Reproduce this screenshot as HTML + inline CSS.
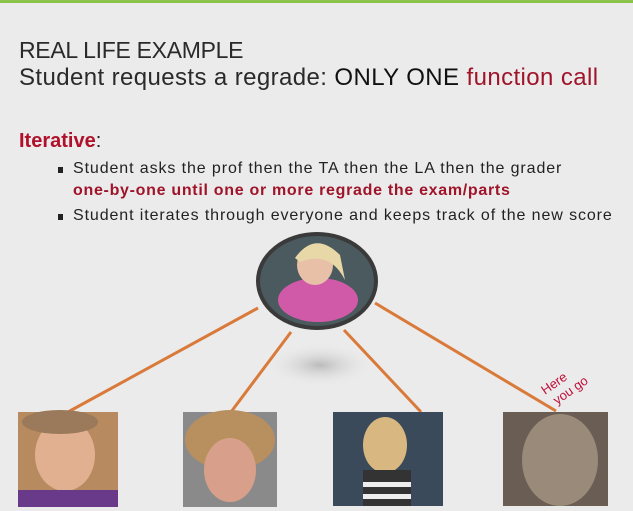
<!DOCTYPE html>
<html><head><style>
body{margin:0;width:633px;height:511px;overflow:hidden;background:#ebebeb;font-family:"Liberation Sans",sans-serif;position:relative}
.t{position:absolute;white-space:nowrap}
.b{position:absolute;left:58px;width:5px;height:6px;background:#222}
</style></head><body>
<div style="position:absolute;left:0;top:0;width:633px;height:3px;background:#8bc34a"></div>
<div class="t" style="left:19px;top:37px;font-size:23px;color:#2a2a2a;letter-spacing:-0.3px">REAL LIFE EXAMPLE</div>
<div class="t" style="left:19px;top:64px;font-size:24px;color:#2a2a2a;letter-spacing:0.4px">Student requests a regrade: <span style="color:#111">ONLY ONE</span> <span style="color:#a0142a">function call</span></div>
<div class="t" style="left:19px;top:130px;font-size:20px;font-weight:bold;color:#b0102a">Iterative<span style="color:#222;font-weight:normal">:</span></div>
<div class="b" style="top:167px"></div>
<div class="t" style="left:73px;top:160px;font-size:16px;color:#222;letter-spacing:0.9px">Student asks the prof then the TA then the LA then the grader</div>
<div class="t" style="left:73px;top:182px;font-size:16px;font-weight:bold;color:#a0142a;letter-spacing:0.7px">one-by-one until one or more regrade the exam/parts</div>
<div class="b" style="top:214px"></div>
<div class="t" style="left:73px;top:207px;font-size:16px;color:#222;letter-spacing:0.9px">Student iterates through everyone and keeps track of the new score</div>
<svg width="633" height="511" style="position:absolute;left:0;top:0">
<defs><radialGradient id="sh"><stop offset="0" stop-color="#bbb"/><stop offset="1" stop-color="#ebebeb" stop-opacity="0"/></radialGradient></defs>
<ellipse cx="320" cy="365" rx="55" ry="22" fill="url(#sh)"/>
<g stroke="#d97a3a" stroke-width="3">
<line x1="258" y1="308" x2="68" y2="412"/><line x1="291" y1="332" x2="231" y2="412"/>
<line x1="344" y1="330" x2="421" y2="412"/><line x1="375" y1="303" x2="556" y2="411"/></g>
<ellipse cx="317" cy="281" rx="59" ry="47" fill="#4a5a5e" stroke="#3a3a3a" stroke-width="4"/>
<ellipse cx="318" cy="300" rx="40" ry="22" fill="#d05aa8"/>
<ellipse cx="315" cy="265" rx="18" ry="20" fill="#e8c0a8"/>
<path d="M295 258 Q315 230 340 255 L345 280 Q330 250 300 262Z" fill="#e8d8a8"/>
<rect x="18" y="412" width="100" height="95" fill="#b88a60"/>
<ellipse cx="65" cy="455" rx="30" ry="36" fill="#e0b090"/><rect x="18" y="490" width="100" height="17" fill="#6a3a8a"/>
<ellipse cx="60" cy="422" rx="38" ry="12" fill="#9a7a5a"/>
<rect x="183" y="412" width="94" height="95" fill="#8a8a8a"/>
<ellipse cx="230" cy="440" rx="45" ry="30" fill="#b89060"/><ellipse cx="230" cy="470" rx="26" ry="32" fill="#d8a08a"/>
<rect x="333" y="412" width="110" height="94" fill="#3a4a5a"/>
<ellipse cx="385" cy="445" rx="22" ry="28" fill="#d8b880"/><rect x="363" y="470" width="48" height="36" fill="#333"/>
<rect x="363" y="482" width="48" height="5" fill="#eee"/><rect x="363" y="494" width="48" height="5" fill="#eee"/>
<rect x="503" y="412" width="105" height="94" fill="#6a5e54"/>
<ellipse cx="560" cy="460" rx="38" ry="46" fill="#9a8a7a"/>
<text x="0" y="0" transform="translate(545,395) rotate(-35)" font-family="Liberation Sans" font-size="13" fill="#c0103a">Here</text>
<text x="0" y="0" transform="translate(557,405) rotate(-35)" font-family="Liberation Sans" font-size="13" fill="#c0103a">you go</text>
</svg>
</body></html>
